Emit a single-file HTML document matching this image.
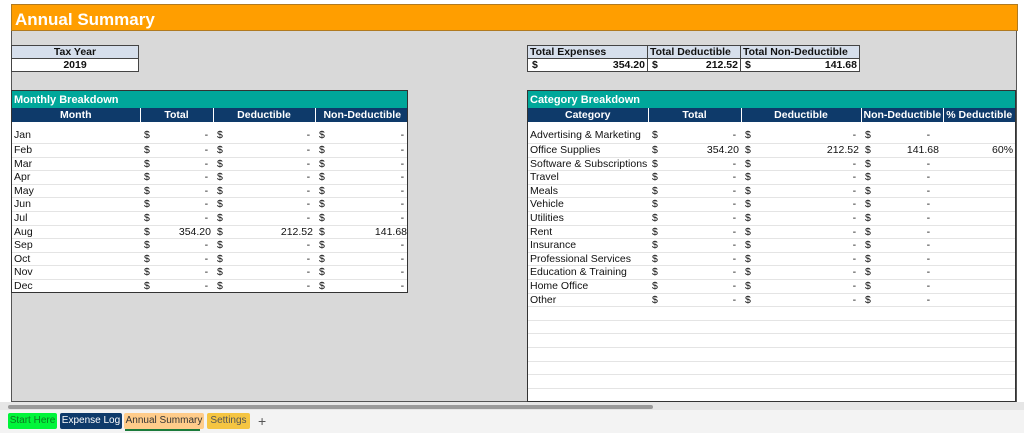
<!DOCTYPE html>
<html><head><meta charset="utf-8"><style>
*{margin:0;padding:0;box-sizing:border-box}
body{width:1024px;height:433px;background:#fff;font-family:"Liberation Sans",sans-serif;font-size:10.5px;color:#111;position:relative;overflow:hidden}
.a{position:absolute}
#banner{left:11px;top:4px;width:1007px;height:27px;background:#ff9e00;color:#fff;font-weight:bold;font-size:17px;padding:5px 0 0 3px;border:1px solid #b07a20}
#sheet{left:11px;top:31px;width:1006px;height:371px;background:#d9d9d9;border-left:1px solid #555;border-right:1px solid #555;border-bottom:1px solid #555}
table{border-collapse:collapse;table-layout:fixed;width:100%}
td{height:13px;line-height:12px;padding:0 2px;white-space:nowrap;overflow:hidden}
tr.x td{height:14px}
.box{position:absolute}
.box td{border:1px solid #444}
.hd td{background:#d6dfec;font-weight:bold;}
.t{position:absolute;background:#fff;border:1px solid #333;overflow:hidden}
.t td{border-bottom:1px solid #e4e4e4}
.title td{background:#00a79a;color:#fff;font-weight:bold;font-size:11px;height:17px;border:none}
.h td{background:#0e3a6a;color:#fff;font-weight:bold;text-align:center;height:14px;border-right:1px solid #fff;border-bottom:none}
.r{text-align:right}
.s{position:relative}
.s::before{content:"$";position:absolute;left:4px}
.first td{height:21px;padding-top:6px}
#tabs{left:0;top:410px;width:1024px;height:23px;background:#f3f3f3}
.tab{position:absolute;top:413px;height:16px;font-size:10px;line-height:16px;border-radius:2px;white-space:nowrap;text-align:center}
</style></head><body>
<div id="banner" class="a">Annual Summary</div>
<div id="sheet" class="a"></div>

<table class="box" style="left:11px;top:45px;width:128px">
<tr class="hd"><td style="text-align:center;height:13px">Tax Year</td></tr>
<tr><td style="text-align:center;font-weight:bold;background:#fff;height:13px">2019</td></tr>
</table>

<table class="box" style="left:527px;top:45px;width:332px">
<col style="width:120px"><col style="width:93px"><col style="width:119px">
<tr class="hd"><td style="height:13px">Total Expenses</td><td>Total Deductible</td><td>Total Non-Deductible</td></tr>
<tr style="background:#fff;font-weight:bold"><td class="r s" style="height:13px">354.20</td><td class="r s">212.52</td><td class="r s">141.68</td></tr>
</table>

<div class="t" style="left:11px;top:90px;width:397px;height:203px">
<table>
<col style="width:128px"><col style="width:73px"><col style="width:102px"><col style="width:94px">
<tr class="title"><td colspan="4">Monthly Breakdown</td></tr>
<tr class="h"><td>Month</td><td>Total</td><td>Deductible</td><td style="border-right:none">Non-Deductible</td></tr>
<tr class="first"><td>Jan</td><td class="r s">-&nbsp;</td><td class="r s">-&nbsp;</td><td class="r s">-&nbsp;</td></tr>
<tr class="x"><td>Feb</td><td class="r s">-&nbsp;</td><td class="r s">-&nbsp;</td><td class="r s">-&nbsp;</td></tr>
<tr><td>Mar</td><td class="r s">-&nbsp;</td><td class="r s">-&nbsp;</td><td class="r s">-&nbsp;</td></tr>
<tr class="x"><td>Apr</td><td class="r s">-&nbsp;</td><td class="r s">-&nbsp;</td><td class="r s">-&nbsp;</td></tr>
<tr><td>May</td><td class="r s">-&nbsp;</td><td class="r s">-&nbsp;</td><td class="r s">-&nbsp;</td></tr>
<tr class="x"><td>Jun</td><td class="r s">-&nbsp;</td><td class="r s">-&nbsp;</td><td class="r s">-&nbsp;</td></tr>
<tr class="x"><td>Jul</td><td class="r s">-&nbsp;</td><td class="r s">-&nbsp;</td><td class="r s">-&nbsp;</td></tr>
<tr><td>Aug</td><td class="r s">354.20</td><td class="r s">212.52</td><td class="r s">141.68</td></tr>
<tr class="x"><td>Sep</td><td class="r s">-&nbsp;</td><td class="r s">-&nbsp;</td><td class="r s">-&nbsp;</td></tr>
<tr><td>Oct</td><td class="r s">-&nbsp;</td><td class="r s">-&nbsp;</td><td class="r s">-&nbsp;</td></tr>
<tr class="x"><td>Nov</td><td class="r s">-&nbsp;</td><td class="r s">-&nbsp;</td><td class="r s">-&nbsp;</td></tr>
<tr class="x"><td style="border:none">Dec</td><td class="r s" style="border:none">-&nbsp;</td><td class="r s" style="border:none">-&nbsp;</td><td class="r s" style="border:none">-&nbsp;</td></tr>
</table></div>

<div class="t" style="left:527px;top:90px;width:489px;height:312px">
<table>
<col style="width:120px"><col style="width:93px"><col style="width:120px"><col style="width:82px"><col style="width:72px">
<tr class="title"><td colspan="5">Category Breakdown</td></tr>
<tr class="h"><td>Category</td><td>Total</td><td>Deductible</td><td>Non-Deductible</td><td style="border-right:none">% Deductible</td></tr>
<tr class="first"><td>Advertising &amp; Marketing</td><td class="r s">-&nbsp;</td><td class="r s">-&nbsp;</td><td class="r s" style="padding-right:10px">-&nbsp;</td><td></td></tr>
<tr class="x"><td>Office Supplies</td><td class="r s">354.20</td><td class="r s">212.52</td><td class="r s" style="padding-right:4px">141.68</td><td class="r">60%</td></tr>
<tr><td>Software &amp; Subscriptions</td><td class="r s">-&nbsp;</td><td class="r s">-&nbsp;</td><td class="r s" style="padding-right:10px">-&nbsp;</td><td></td></tr>
<tr class="x"><td>Travel</td><td class="r s">-&nbsp;</td><td class="r s">-&nbsp;</td><td class="r s" style="padding-right:10px">-&nbsp;</td><td></td></tr>
<tr><td>Meals</td><td class="r s">-&nbsp;</td><td class="r s">-&nbsp;</td><td class="r s" style="padding-right:10px">-&nbsp;</td><td></td></tr>
<tr class="x"><td>Vehicle</td><td class="r s">-&nbsp;</td><td class="r s">-&nbsp;</td><td class="r s" style="padding-right:10px">-&nbsp;</td><td></td></tr>
<tr class="x"><td>Utilities</td><td class="r s">-&nbsp;</td><td class="r s">-&nbsp;</td><td class="r s" style="padding-right:10px">-&nbsp;</td><td></td></tr>
<tr><td>Rent</td><td class="r s">-&nbsp;</td><td class="r s">-&nbsp;</td><td class="r s" style="padding-right:10px">-&nbsp;</td><td></td></tr>
<tr class="x"><td>Insurance</td><td class="r s">-&nbsp;</td><td class="r s">-&nbsp;</td><td class="r s" style="padding-right:10px">-&nbsp;</td><td></td></tr>
<tr><td>Professional Services</td><td class="r s">-&nbsp;</td><td class="r s">-&nbsp;</td><td class="r s" style="padding-right:10px">-&nbsp;</td><td></td></tr>
<tr class="x"><td>Education &amp; Training</td><td class="r s">-&nbsp;</td><td class="r s">-&nbsp;</td><td class="r s" style="padding-right:10px">-&nbsp;</td><td></td></tr>
<tr class="x"><td>Home Office</td><td class="r s">-&nbsp;</td><td class="r s">-&nbsp;</td><td class="r s" style="padding-right:10px">-&nbsp;</td><td></td></tr>
<tr><td>Other</td><td class="r s">-&nbsp;</td><td class="r s">-&nbsp;</td><td class="r s" style="padding-right:10px">-&nbsp;</td><td></td></tr>
<tr class="x"><td colspan="5"></td></tr><tr><td colspan="5"></td></tr><tr class="x"><td colspan="5"></td></tr><tr class="x"><td colspan="5"></td></tr><tr><td colspan="5"></td></tr><tr class="x"><td colspan="5"></td></tr><tr><td colspan="5"></td></tr><tr class="x"><td colspan="5"></td></tr>
</table></div>

<div class="a" style="left:0;top:402px;width:1024px;height:8px;background:#e6e6e6"></div>
<div class="a" style="left:8px;top:405px;width:645px;height:4px;background:#9a9a9a;border-radius:2px"></div>
<div id="tabs" class="a"></div>
<div class="tab" style="left:8px;width:49px;background:#00f53a;color:#0a7a20">Start Here</div>
<div class="tab" style="left:60px;width:62px;background:#0e3a6a;color:#fff">Expense Log</div>
<div class="tab" style="left:124px;width:80px;background:#ffcc8a;color:#333">Annual Summary</div>
<div class="a" style="left:125px;top:429px;width:75px;height:2px;background:#1a7a3a"></div>
<div class="tab" style="left:207px;width:43px;background:#f5c542;color:#555">Settings</div>
<div class="a" style="left:258px;top:413px;font-size:14px;color:#555;line-height:16px">+</div>
</body></html>
